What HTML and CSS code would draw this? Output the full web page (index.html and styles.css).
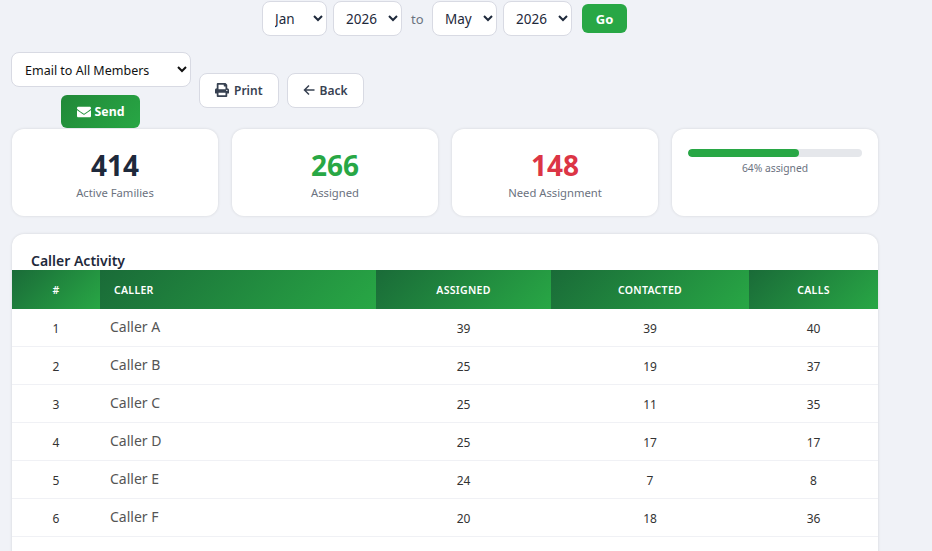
FILE: index.html
```html
<!DOCTYPE html>
<html lang="en">
<head>
	<meta charset="UTF-8">
	<meta name="viewport" content="width=device-width, initial-scale=1.0">
	<title>Caller Activity</title>
	<link rel="stylesheet" href="styles.css">
</head>
<body>

	<div class="content">
		<!-- Date range -->
		<form class="rangebar">
			<select class="pick pick-month"><option>Jan</option></select>
			<select class="pick pick-year"><option>2026</option></select>
			<span class="rangeto">to</span>
			<select class="pick pick-month"><option>May</option></select>
			<select class="pick pick-year"><option>2026</option></select>
			<button type="button" class="btn-go">Go</button>
		</form>

		<!-- Actions -->
		<div class="actions">
			<div class="mailbox">
				<select class="pick pick-mail"><option>Email to All Members</option></select>
				<button type="button" class="btn-send">
					<svg class="icon" viewBox="0 0 512 512"><path d="M502.3 190.8c3.9-3.1 9.7-.2 9.7 4.7V400c0 26.5-21.5 48-48 48H48c-26.5 0-48-21.5-48-48V195.6c0-5 5.7-7.8 9.7-4.7 22.4 17.4 52.1 39.5 154.1 113.6 21.1 15.4 56.7 47.8 92.2 47.6 35.7.3 72-32.8 92.3-47.6 102-74.1 131.6-96.3 154-113.7zM256 320c23.2.4 56.6-29.2 73.4-41.4 132.7-96.3 142.8-104.7 173.4-128.7 5.8-4.5 9.2-11.5 9.2-18.9v-19c0-26.5-21.5-48-48-48H48C21.5 64 0 85.5 0 112v19c0 7.4 3.4 14.3 9.2 18.9 30.6 23.9 40.7 32.4 173.4 128.7 16.8 12.2 50.2 41.8 73.4 41.4z"/></svg>
					Send
				</button>
			</div>
			<button type="button" class="btn-light">
				<svg class="icon" viewBox="0 0 512 512"><path d="M448 192V77.25c0-8.49-3.37-16.62-9.37-22.63L393.37 9.37c-6-6-14.14-9.37-22.63-9.37H96C78.33 0 64 14.33 64 32v160c-35.35 0-64 28.65-64 64v112c0 8.84 7.16 16 16 16h48v96c0 17.67 14.33 32 32 32h320c17.67 0 32-14.33 32-32v-96h48c8.84 0 16-7.16 16-16V256c0-35.35-28.65-64-64-64zm-64 256H128v-96h256v96zm0-224H128V64h192v48c0 8.84 7.16 16 16 16h48v96zm48 72c-13.25 0-24-10.75-24-24 0-13.26 10.75-24 24-24s24 10.74 24 24c0 13.25-10.75 24-24 24z"/></svg>
				Print
			</button>
			<button type="button" class="btn-light">
				<svg class="icon icon-line" viewBox="0 0 12 12"><path d="M11.5 6H1.5M6 1.5L1.5 6L6 10.5"/></svg>
				Back
			</button>
		</div>

		<!-- Summary cards -->
		<div class="stats">
			<div class="stat">
				<div class="num">414</div>
				<div class="lbl">Active Families</div>
			</div>
			<div class="stat">
				<div class="num num-green">266</div>
				<div class="lbl">Assigned</div>
			</div>
			<div class="stat">
				<div class="num num-red">148</div>
				<div class="lbl">Need Assignment</div>
			</div>
			<div class="stat stat-progress">
				<div class="track"><div class="fill" style="width: 64%"></div></div>
				<div class="tracklbl">64% assigned</div>
			</div>
		</div>

		<!-- Caller table -->
		<div class="tablecard">
			<h2>Caller Activity</h2>
			<table>
				<colgroup>
					<col class="col-num">
					<col class="col-name">
					<col class="col-assigned">
					<col class="col-contacted">
					<col class="col-calls">
				</colgroup>
				<thead>
					<tr>
						<th>#</th>
						<th class="left">Caller</th>
						<th>Assigned</th>
						<th>Contacted</th>
						<th>Calls</th>
					</tr>
				</thead>
				<tbody>
					<tr><td>1</td><td class="left">Caller A</td><td>39</td><td>39</td><td>40</td></tr>
					<tr><td>2</td><td class="left">Caller B</td><td>25</td><td>19</td><td>37</td></tr>
					<tr><td>3</td><td class="left">Caller C</td><td>25</td><td>11</td><td>35</td></tr>
					<tr><td>4</td><td class="left">Caller D</td><td>25</td><td>17</td><td>17</td></tr>
					<tr><td>5</td><td class="left">Caller E</td><td>24</td><td>7</td><td>8</td></tr>
					<tr><td>6</td><td class="left">Caller F</td><td>20</td><td>18</td><td>36</td></tr>
				</tbody>
			</table>
		</div>
	</div>

</body>
</html>
```

FILE: styles.css
```css
:root{
	--green: #28a745;
	--darkgreen: #1a6b38;
	--ink: #1e293b;
	--muted: #6b7280;
	--line: #d8dae3;
}
*{
	box-sizing: border-box;
}
html, body {
	height: 100%;
	overflow: hidden;
}
body {
	font-family: "Noto Sans", "Open Sans", Arial, sans-serif;
	margin: 0;
	background-color: #f0f2f7;
	color: var(--ink);
}

.content {
	width: 866px;
	margin-left: 12px;
	padding-top: 1px;
}

.rangebar {
	display: flex;
	justify-content: center;
	align-items: center;
	height: 35px;
	margin: 0 0 0 -1px;
}

.pick {
	height: 35px;
	padding: 0 0 0 8px;
	background-color: white;
	border: 1px solid var(--line);
	border-radius: 8px;
	font-family: inherit;
	font-size: 13.5px;
	color: var(--ink);
}
.pick-month {
	width: 65px;
}
.pick-year {
	width: 69px;
	margin-left: 6px;
}
.rangeto {
	width: 13px;
	margin: 0 8px 0 9px;
	font-size: 13px;
	color: var(--muted);
}
.btn-go {
	margin-left: 10px;
	width: 45px;
	height: 29px;
	border: none;
	border-radius: 6px;
	background-color: var(--green);
	color: white;
	font-family: inherit;
	font-size: 13px;
	font-weight: 700;
}

.actions {
	display: flex;
	align-items: center;
	gap: 8px;
	margin: 16px 0 0 -1px;
}
.mailbox {
	display: flex;
	flex-direction: column;
	align-items: center;
	gap: 8px;
}
.pick-mail {
	width: 180px;
	padding: 1px 0 0 9px;
	font-size: 12.5px;
	color: #111;
}
.btn-send {
	display: flex;
	align-items: center;
	justify-content: center;
	gap: 4px;
	width: 79px;
	height: 33px;
	margin-right: 1px;
	border: none;
	border-radius: 6px;
	background: linear-gradient(135deg, #218838, var(--green));
	color: white;
	font-family: inherit;
	font-size: 12.3px;
	font-weight: 700;
}
.btn-light {
	display: flex;
	align-items: center;
	justify-content: center;
	gap: 5px;
	height: 35px;
	padding: 0 15px;
	background-color: white;
	border: 1px solid var(--line);
	border-radius: 8px;
	color: #374151;
	font-family: inherit;
	font-size: 12px;
	font-weight: 600;
}
.icon {
	width: 14px;
	height: 14px;
	fill: currentColor;
}
.icon-line {
	width: 12px;
	height: 12px;
	fill: none;
	stroke: currentColor;
	stroke-width: 1.5;
}

.stats {
	display: grid;
	grid-template-columns: repeat(4, 206px);
	gap: 14px;
	margin-top: 1px;
}
.stat {
	height: 87px;
	padding-top: 19px;
	background-color: white;
	border-radius: 12px;
	box-shadow: 0 0 3px rgba(0, 0, 0, 0.12);
	text-align: center;
}
.num {
	font-size: 28px;
	font-weight: 700;
	line-height: 35px;
}
.num-green {
	color: var(--green);
}
.num-red {
	color: #dc3545;
}
.lbl {
	margin-top: 2px;
	font-size: 11.25px;
	line-height: 16px;
	color: var(--muted);
}
.stat-progress {
	padding: 20px 16px 0;
}
.track {
	height: 8px;
	background-color: #e5e7eb;
	border-radius: 4px;
	overflow: hidden;
}
.fill {
	height: 100%;
	background-color: var(--green);
	border-radius: 4px;
}
.tracklbl {
	margin-top: 4px;
	font-size: 10.3px;
	line-height: 15px;
	color: var(--muted);
}

.tablecard {
	margin-top: 18px;
	padding-top: 18px;
	padding-bottom: 40px;
	background-color: white;
	border-radius: 12px;
	box-shadow: 0 0 3px rgba(0, 0, 0, 0.12);
}
.tablecard h2 {
	margin: 0 0 0 19px;
	font-size: 14px;
	font-weight: 600;
	line-height: 18px;
}
table {
	width: 100%;
	table-layout: fixed;
	border-collapse: separate;
	border-spacing: 0;
}
.col-num { width: 88px; }
.col-name { width: 276px; }
.col-assigned { width: 175px; }
.col-contacted { width: 198px; }
.col-calls { width: 129px; }

th {
	height: 39px;
	padding: 0;
	background: linear-gradient(135deg, var(--darkgreen), var(--green));
	color: white;
	font-size: 10.5px;
	font-weight: 600;
	letter-spacing: 0.3px;
	text-transform: uppercase;
	text-align: center;
}
td {
	height: 38px;
	padding: 2px 0 0;
	border-bottom: 1px solid #f0f1f5;
	font-size: 12px;
	color: #333;
	text-align: center;
}
th.left {
	padding-left: 14px;
	text-align: left;
}
td.left {
	padding: 0 0 2px 10px;
	font-size: 14px;
	color: #555;
	text-align: left;
}
```
